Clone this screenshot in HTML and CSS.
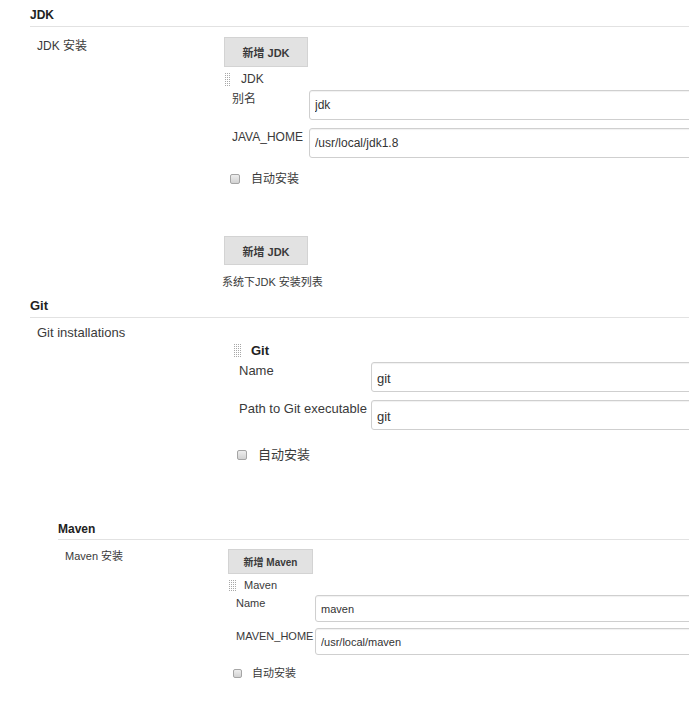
FILE: index.html
```html
<!DOCTYPE html>
<html lang="zh-CN">
<head>
<meta charset="utf-8">
<title>Global Tool Configuration</title>
<link rel="stylesheet" href="styles.css">
</head>
<body>
<section class="sec sec-jdk">
  <div class="sec-title">JDK</div>
  <div class="sec-body">
    <div class="sec-label">JDK 安装</div>
    <div class="sec-content">
      <button class="btn">新增 JDK</button>
      <div class="inst">
        <div class="inst-head"><span class="grip"></span><span class="inst-name">JDK</span></div>
        <div class="field field-first"><label class="field-label">别名</label><input class="field-input" type="text" value="jdk"></div>
        <div class="field"><label class="field-label">JAVA_HOME</label><input class="field-input" type="text" value="/usr/local/jdk1.8"></div>
        <label class="check"><input class="cb" type="checkbox"><span class="check-text">自动安装</span></label>
      </div>
      <button class="btn btn-second">新增 JDK</button>
      <div class="desc">系统下JDK 安装列表</div>
    </div>
  </div>
</section>

<section class="sec sec-git">
  <div class="sec-title">Git</div>
  <div class="sec-body">
    <div class="sec-label">Git installations</div>
    <div class="sec-content">
      <div class="inst">
        <div class="inst-head"><span class="grip"></span><span class="inst-name">Git</span></div>
        <div class="field field-first"><label class="field-label">Name</label><input class="field-input" type="text" value="git"></div>
        <div class="field"><label class="field-label">Path to Git executable</label><input class="field-input" type="text" value="git"></div>
        <label class="check"><input class="cb" type="checkbox"><span class="check-text">自动安装</span></label>
      </div>
    </div>
  </div>
</section>

<section class="sec sec-maven">
  <div class="sec-title">Maven</div>
  <div class="sec-body">
    <div class="sec-label">Maven 安装</div>
    <div class="sec-content">
      <button class="btn">新增 Maven</button>
      <div class="inst">
        <div class="inst-head"><span class="grip"></span><span class="inst-name">Maven</span></div>
        <div class="field field-first"><label class="field-label">Name</label><input class="field-input" type="text" value="maven"></div>
        <div class="field"><label class="field-label">MAVEN_HOME</label><input class="field-input" type="text" value="/usr/local/maven"></div>
        <label class="check"><input class="cb" type="checkbox"><span class="check-text">自动安装</span></label>
      </div>
    </div>
  </div>
</section>
</body>
</html>
```

FILE: styles.css
```css
html, body {
  margin: 0;
  padding: 0;
  background: #fff;
}
body {
  width: 689px;
  height: 712px;
  overflow: hidden;
  font-family: "Liberation Sans", "Noto Sans CJK SC", sans-serif;
  color: #3a3a3a;
  font-size: 12px;
}

.sec-title {
  font-weight: bold;
  color: #222;
  border-bottom: 1px solid #e2e2e2;
}
.sec-body {
  display: flex;
}
.sec-label {
  flex: none;
  box-sizing: border-box;
}
.sec-content {
  flex: 1;
  min-width: 0;
}

.btn {
  display: block;
  box-sizing: border-box;
  margin: 0;
  padding: 0;
  background: #e2e2e2;
  border: 1px solid #d3d3d3;
  border-radius: 0;
  color: #3a3a3a;
  font-family: "Liberation Sans", "Noto Sans CJK SC", sans-serif;
  font-weight: bold;
  text-align: center;
}

.inst-head {
  display: flex;
  align-items: center;
}
.grip {
  flex: none;
  background-color: #fff;
  background-image:
    linear-gradient(90deg, #fff 1px, transparent 1px),
    linear-gradient(#fff 1px, #a8a8a8 1px);
  background-size: 2px 2px;
}

.field {
  display: flex;
  align-items: flex-start;
}
.field-label {
  flex: none;
  box-sizing: border-box;
  white-space: nowrap;
}
.field-input {
  flex: 1;
  min-width: 0;
  box-sizing: border-box;
  margin: 0 -12px 0 0;
  border: 1px solid #cfcfcf;
  border-radius: 3px;
  box-shadow: inset 0 1px 1px rgba(0, 0, 0, 0.06);
  background: #fff;
  color: #333;
  font-family: "Liberation Sans", "Noto Sans CJK SC", sans-serif;
  outline: none;
}

.check {
  display: flex;
  align-items: center;
}
.cb {
  appearance: none;
  -webkit-appearance: none;
  flex: none;
  margin: 0;
  box-sizing: border-box;
  border: 1px solid #a5a5a5;
  border-radius: 2px;
  background: linear-gradient(#eeeeee, #d2d2d2);
}

/* ---------- JDK ---------- */
.sec-jdk {
  padding-left: 30px;
}
.sec-jdk .sec-title {
  font-size: 12px;
  line-height: 14px;
  padding: 8px 0 4px;
}
.sec-jdk .sec-label {
  width: 194px;
  padding: 12px 0 0 7px;
  line-height: 14px;
}
.sec-jdk .sec-content {
  padding-top: 10px;
}
.sec-jdk .btn {
  width: 84px;
  height: 30px;
  font-size: 11px;
}
.sec-jdk .btn-second {
  margin-top: 50px;
  height: 29px;
}
.sec-jdk .inst-head {
  margin-top: 5px;
  height: 14px;
  line-height: 14px;
}
.sec-jdk .grip {
  width: 7px;
  height: 14px;
  margin-right: 10px;
}
.sec-jdk .field {
  margin-top: 8px;
}
.sec-jdk .field-first {
  margin-top: 4px;
}
.sec-jdk .field-label {
  width: 85px;
  padding: 2px 0 0 8px;
  line-height: 14px;
}
.sec-jdk .field-input {
  height: 30px;
  padding: 0 5px;
  font-size: 12px;
}
.sec-jdk .check {
  margin-top: 14px;
  line-height: 14px;
}
.sec-jdk .cb {
  width: 10px;
  height: 10px;
  margin-left: 6px;
  margin-right: 11px;
}
.desc {
  margin: 10px 0 0 -2px;
  line-height: 14px;
  font-size: 11px;
  white-space: nowrap;
}

/* ---------- Git ---------- */
.sec-git {
  padding-left: 30px;
  font-size: 13px;
}
.sec-git .sec-title {
  font-size: 13px;
  line-height: 15px;
  padding: 9px 0 4px;
}
.sec-git .sec-label {
  width: 203px;
  padding: 7px 0 0 7px;
  line-height: 15px;
}
.sec-git .sec-content {
  padding-top: 25px;
}
.sec-git .inst-head {
  height: 14px;
  line-height: 15px;
}
.sec-git .inst-name {
  font-weight: bold;
  color: #222;
}
.sec-git .grip {
  width: 9px;
  height: 14px;
  margin-right: 9px;
}
.sec-git .field {
  margin-top: 8px;
}
.sec-git .field-first {
  margin-top: 5px;
}
.sec-git .field-label {
  width: 138px;
  padding: 1px 0 0 6px;
  line-height: 15px;
}
.sec-git .field-input {
  height: 30px;
  padding: 2px 5px 0;
  font-size: 13px;
}
.sec-git .check {
  margin-top: 17px;
  line-height: 15px;
}
.sec-git .cb {
  width: 10px;
  height: 10px;
  margin-left: 4px;
  margin-right: 11px;
}

/* ---------- Maven ---------- */
.sec-maven {
  margin-top: 52px;
  padding-left: 58px;
  font-size: 11px;
}
.sec-maven .sec-title {
  font-size: 12px;
  line-height: 14px;
  padding: 8px 0 3px;
}
.sec-maven .sec-label {
  width: 170px;
  padding: 10px 0 0 7px;
  line-height: 13px;
}
.sec-maven .sec-content {
  padding-top: 9px;
}
.sec-maven .btn {
  width: 85px;
  height: 25px;
  font-size: 10px;
}
.sec-maven .inst-head {
  margin-top: 5px;
  height: 13px;
  line-height: 13px;
}
.sec-maven .grip {
  width: 8px;
  height: 13px;
  margin-right: 8px;
}
.sec-maven .field {
  margin-top: 6px;
}
.sec-maven .field-first {
  margin-top: 3px;
}
.sec-maven .field-label {
  width: 87px;
  padding: 2px 0 0 8px;
  line-height: 13px;
}
.sec-maven .field-input {
  height: 27px;
  padding: 0 5px;
  font-size: 11px;
}
.sec-maven .check {
  margin-top: 12px;
  line-height: 13px;
}
.sec-maven .cb {
  width: 9px;
  height: 9px;
  margin-left: 5px;
  margin-right: 10px;
}
```
